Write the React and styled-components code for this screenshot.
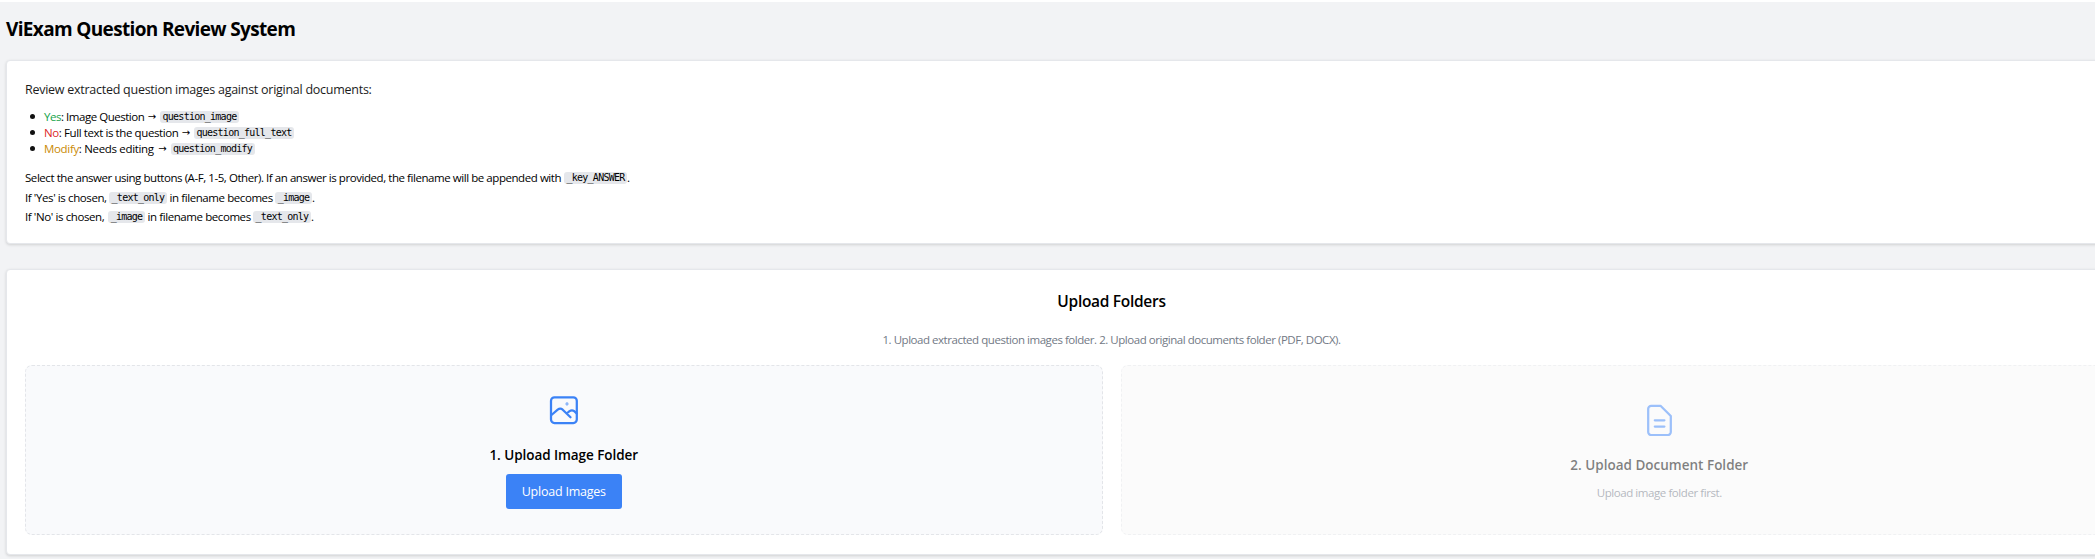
import React from "react";
import styled, { createGlobalStyle } from "styled-components";

const Global = createGlobalStyle`
  * { box-sizing: border-box; }
  html, body { margin: 0; background: #fff; }
  body {
    font-family: "Open Sans", "Noto Sans", sans-serif;
    color: #000;
  }
  h1, h2, h3, p, ul { margin: 0; padding: 0; font-weight: 400; }
`;

const Viewport = styled.div`
  width: 2095px;
  height: 559px;
  padding-top: 2px;
  overflow: hidden;
`;

const Page = styled.main`
  height: 557px;
  width: 2225px;
  padding: 11px 8px 0 6px;
  background: #f2f3f5;
  display: flex;
  flex-direction: column;
`;

const Line = styled.span`
  display: inline-block;
  width: ${(p) => (p.$w ? p.$w + "px" : "auto")};
  white-space: pre;
  letter-spacing: ${(p) => p.$ls || 0}px;
`;

const Title = styled.h1`
  flex: none;
  height: 47px;
  font-size: 19px;
  line-height: 32px;
  font-weight: 700;
`;

const Card = styled.section`
  height: ${(p) => p.$h}px;
  margin-bottom: 25px;
  flex: none;
  padding: 0 18px;
  background: #fff;
  border: 1px solid #e5e7eb;
  border-radius: 4px;
  box-shadow: 0 1px 3px rgba(0, 0, 0, 0.14);
`;

const Intro = styled.p`
  padding-top: 18px;
  font-size: 12.5px;
  line-height: 22px;
  color: #1c1c1c;
`;

const Outcomes = styled.ul`
  margin: 7px 0 0 19px;
  list-style: none;
`;

const Outcome = styled.li`
  display: flex;
  align-items: center;
  height: 16.4px;
  font-size: 11.5px;
  white-space: nowrap;
  &::before {
    content: "";
    width: 5px;
    height: 5px;
    margin-left: -14px;
    margin-right: 9px;
    border-radius: 50%;
    background: #111;
  }
`;

const Arrow = styled.span`
  width: 15px;
  font-family: "DejaVu Sans", sans-serif;
  font-size: 10px;
  text-align: center;
  padding-right: 1px;
`;

const Tag = styled.span`
  color: ${(p) => p.$color};
  font-weight: 500;
`;

const Code = styled.code`
  flex: none;
  width: ${(p) => p.$w}px;
  height: 12px;
  margin-top: 1px;
  border-radius: 3px;
  background: #e5e7eb;
  font-family: "DejaVu Sans Mono", monospace;
  font-size: 10px;
  line-height: 12px;
  letter-spacing: -0.74px;
  text-align: center;
  white-space: nowrap;
`;

const Notes = styled.div`
  margin-top: 11px;
`;

const Note = styled.p`
  display: flex;
  align-items: center;
  height: 19.4px;
  font-size: 11.5px;
  white-space: pre;
`;

const Heading = styled.h2`
  padding-top: 18px;
  font-size: 15.5px;
  line-height: 26px;
  font-weight: 600;
  text-align: center;
`;

const Hint = styled.p`
  margin-top: 17px;
  font-size: 11.5px;
  line-height: 18px;
  text-align: center;
  color: #727985;
`;

const Panels = styled.div`
  display: grid;
  grid-template-columns: 1fr 1fr;
  gap: 18px;
  margin-top: 16px;
`;

const Panel = styled.div`
  height: 170px;
  display: flex;
  flex-direction: column;
  align-items: center;
  padding-top: ${(p) => p.$top}px;
  border: 1px dashed #e3e5e9;
  border-radius: 7px;
  background: ${(p) => (p.$disabled ? "#f9f9f9" : "#f9fafc")};
  opacity: ${(p) => (p.$disabled ? 0.5 : 1)};
`;

const PanelTitle = styled.h3`
  margin-top: 18px;
  font-size: 13.5px;
  line-height: 22px;
  font-weight: 600;
`;

const Button = styled.button`
  width: 116px;
  height: 35px;
  margin-top: 8px;
  padding: 0;
  border: 0;
  border-radius: 3px;
  background: #3b82f6;
  color: #fff;
  font: 400 12.5px/35px "Open Sans", sans-serif;
`;

const Waiting = styled.p`
  margin-top: 8px;
  font-size: 11.5px;
  line-height: 18px;
  color: #6b7280;
`;

const Icon = styled.svg`
  flex: none;
  width: 32px;
  height: 32px;
  fill: none;
  stroke: #3b82f6;
  stroke-width: 2.25;
  stroke-linecap: round;
  stroke-linejoin: round;
`;

export default function App() {
  return (
    <Viewport>
      <Global />
      <Page>
        <Title><Line $ls={-0.65}>ViExam Question Review System</Line></Title>
        <Card $h={184}>
          <Intro><Line $ls={-0.26}>Review extracted question images against original documents:</Line></Intro>
          <Outcomes>
            <Outcome>
              <Line $w={101} $ls={-0.47}><Tag $color="#16a34a">Yes</Tag>: Image Question</Line>
              <Arrow>→</Arrow>
              <Code $w={79}>question_image</Code>
            </Outcome>
            <Outcome>
              <Line $w={135} $ls={-0.4}><Tag $color="#dc2626">No</Tag>: Full text is the question</Line>
              <Arrow>→</Arrow>
              <Code $w={100}>question_full_text</Code>
            </Outcome>
            <Outcome>
              <Line $w={111.5} $ls={-0.33}><Tag $color="#ca8a04">Modify</Tag>: Needs editing</Line>
              <Arrow>→</Arrow>
              <Code $w={84}>question_modify</Code>
            </Outcome>
          </Outcomes>
          <Notes>
            <Note>
              <Line $w={539} $ls={-0.44}>Select the answer using buttons (A-F, 1-5, Other). If an answer is provided, the filename will be appended with</Line>
              <Code $w={63}>_key_ANSWER</Code>.
            </Note>
            <Note>
              <Line $w={84} $ls={-0.4}>If 'Yes' is chosen,</Line>
              <Code $w={58}>_text_only</Code>
              <Line $w={108} $ls={-0.42}>{" in filename becomes"}</Line>
              <Code $w={37}>_image</Code>.
            </Note>
            <Note>
              <Line $w={83} $ls={-0.4}>If 'No' is chosen,</Line>
              <Code $w={37}>_image</Code>
              <Line $w={108} $ls={-0.42}>{" in filename becomes"}</Line>
              <Code $w={58}>_text_only</Code>.
            </Note>
          </Notes>
        </Card>
        <Card $h={286}>
          <Heading><Line $ls={-0.3}>Upload Folders</Line></Heading>
          <Hint><Line $ls={-0.46}>1. Upload extracted question images folder. 2. Upload original documents folder (PDF, DOCX).</Line></Hint>
          <Panels>
            <Panel $top={28}>
              <Icon viewBox="0 0 32 32">
                <rect x="3" y="3.300" width="25.800" height="25.800" rx="3.500" />
                <path d="M3.500 21L9.700 15.700Q12.200 13.700 14.700 15.700L22.500 23.300M18.700 19.500L21.500 17.200Q24 15.400 26.200 17.200L28.600 19.300" />
                <circle cx="19" cy="10" r="0.300" />
              </Icon>
              <PanelTitle><Line $ls={-0.06}>1. Upload Image Folder</Line></PanelTitle>
              <Button><Line $ls={-0.22}>Upload Images</Line></Button>
            </Panel>
            <Panel $top={38} $disabled>
              <Icon viewBox="0 0 32 32">
                <path d="M8.200 1.800H17.500L27.800 12V28a3 3 0 0 1-3 3H8.200a3 3 0 0 1-3-3V4.800a3 3 0 0 1 3-3zM11.800 16.300h9.600M11.800 22.600h9.600" />
              </Icon>
              <PanelTitle><Line>2. Upload Document Folder</Line></PanelTitle>
              <Waiting><Line $ls={-0.43}>Upload image folder first.</Line></Waiting>
            </Panel>
          </Panels>
        </Card>
      </Page>
    </Viewport>
  );
}
